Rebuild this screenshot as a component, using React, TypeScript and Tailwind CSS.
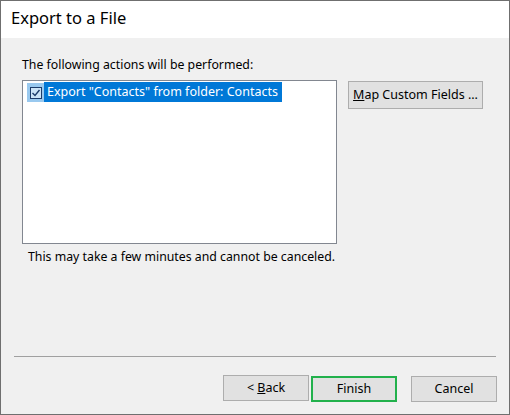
import React from 'react';

const font = { fontFamily: '"Noto Sans", "Open Sans", sans-serif' };

const DialogButton: React.FC<{ children: React.ReactNode; primary?: boolean }> = ({ children, primary }) => (
  <button
    className={
      primary
        ? 'w-[86px] h-[26px] bg-[#e1e1e1] border-2 border-[#22b14c] text-[12.5px] text-black leading-[16px]'
        : 'w-[86px] h-[26px] bg-[#e1e1e1] border border-[#adadad] text-[12.5px] text-black leading-[16px]'
    }
  >
    {children}
  </button>
);

const App: React.FC = () => {
  return (
    <div
      className="w-[510px] h-[415px] border border-[#6f6f6f] bg-[#f0f0f0] flex flex-col text-black overflow-hidden"
      style={font}
    >
      {/* title */}
      <div className="h-[37px] bg-white pl-[10px] pt-[5px]">
        <h1 className="text-[16.5px] leading-[24px]">Export to a File</h1>
      </div>

      <div className="pl-[21px] pr-[25px]">
        <p className="mt-[19px] text-[12.3px] leading-[16px]">The following actions will be performed:</p>

        <div className="mt-[7px] flex items-start gap-[11px]">
          <div className="w-[315px] h-[164px] bg-white border border-[#828790] pt-[1px] pl-[4px]">
            <div className="flex h-[20px]">
              <div className="w-[17px] h-[19px] mt-[1px] bg-[#99c9ef] flex items-center justify-center">
                <div className="w-[12px] h-[12px] border border-[#1c3c6a] bg-[#cce4f7] flex items-center justify-center">
                  <svg width="10" height="10" viewBox="0 0 10 10">
                    <path d="M1.5 5 L4 7.5 L8.5 2" stroke="#1c3c6a" strokeWidth="1.4" fill="none" />
                  </svg>
                </div>
              </div>
              <div className="h-[20px] bg-[#0078d7] text-white text-[12.5px] leading-[20px] pl-[3px] pr-[4px]">
                Export "Contacts" from folder: Contacts
              </div>
            </div>
          </div>
          <button className="mt-[1px] w-[135px] h-[28px] bg-[#e1e1e1] border border-[#adadad] text-[12.5px] leading-[16px]">
            <span className="underline">M</span>ap Custom Fields ...
          </button>
        </div>

        <p className="mt-[5px] pl-[6px] text-[12.3px] leading-[16px]">
          This may take a few minutes and cannot be canceled.
        </p>
      </div>

      <div className="mx-[13px] mt-[91px] h-px bg-[#a0a0a0]" />

      <div className="mt-[18px] pr-[12px] flex justify-end">
        <div className="flex">
          <DialogButton>
            &lt; <span className="underline">B</span>ack
          </DialogButton>
          <div className="ml-[2px]">
            <DialogButton primary>Finish</DialogButton>
          </div>
          <div className="ml-[14px]">
            <DialogButton>Cancel</DialogButton>
          </div>
        </div>
      </div>
    </div>
  );
};

export default App;
